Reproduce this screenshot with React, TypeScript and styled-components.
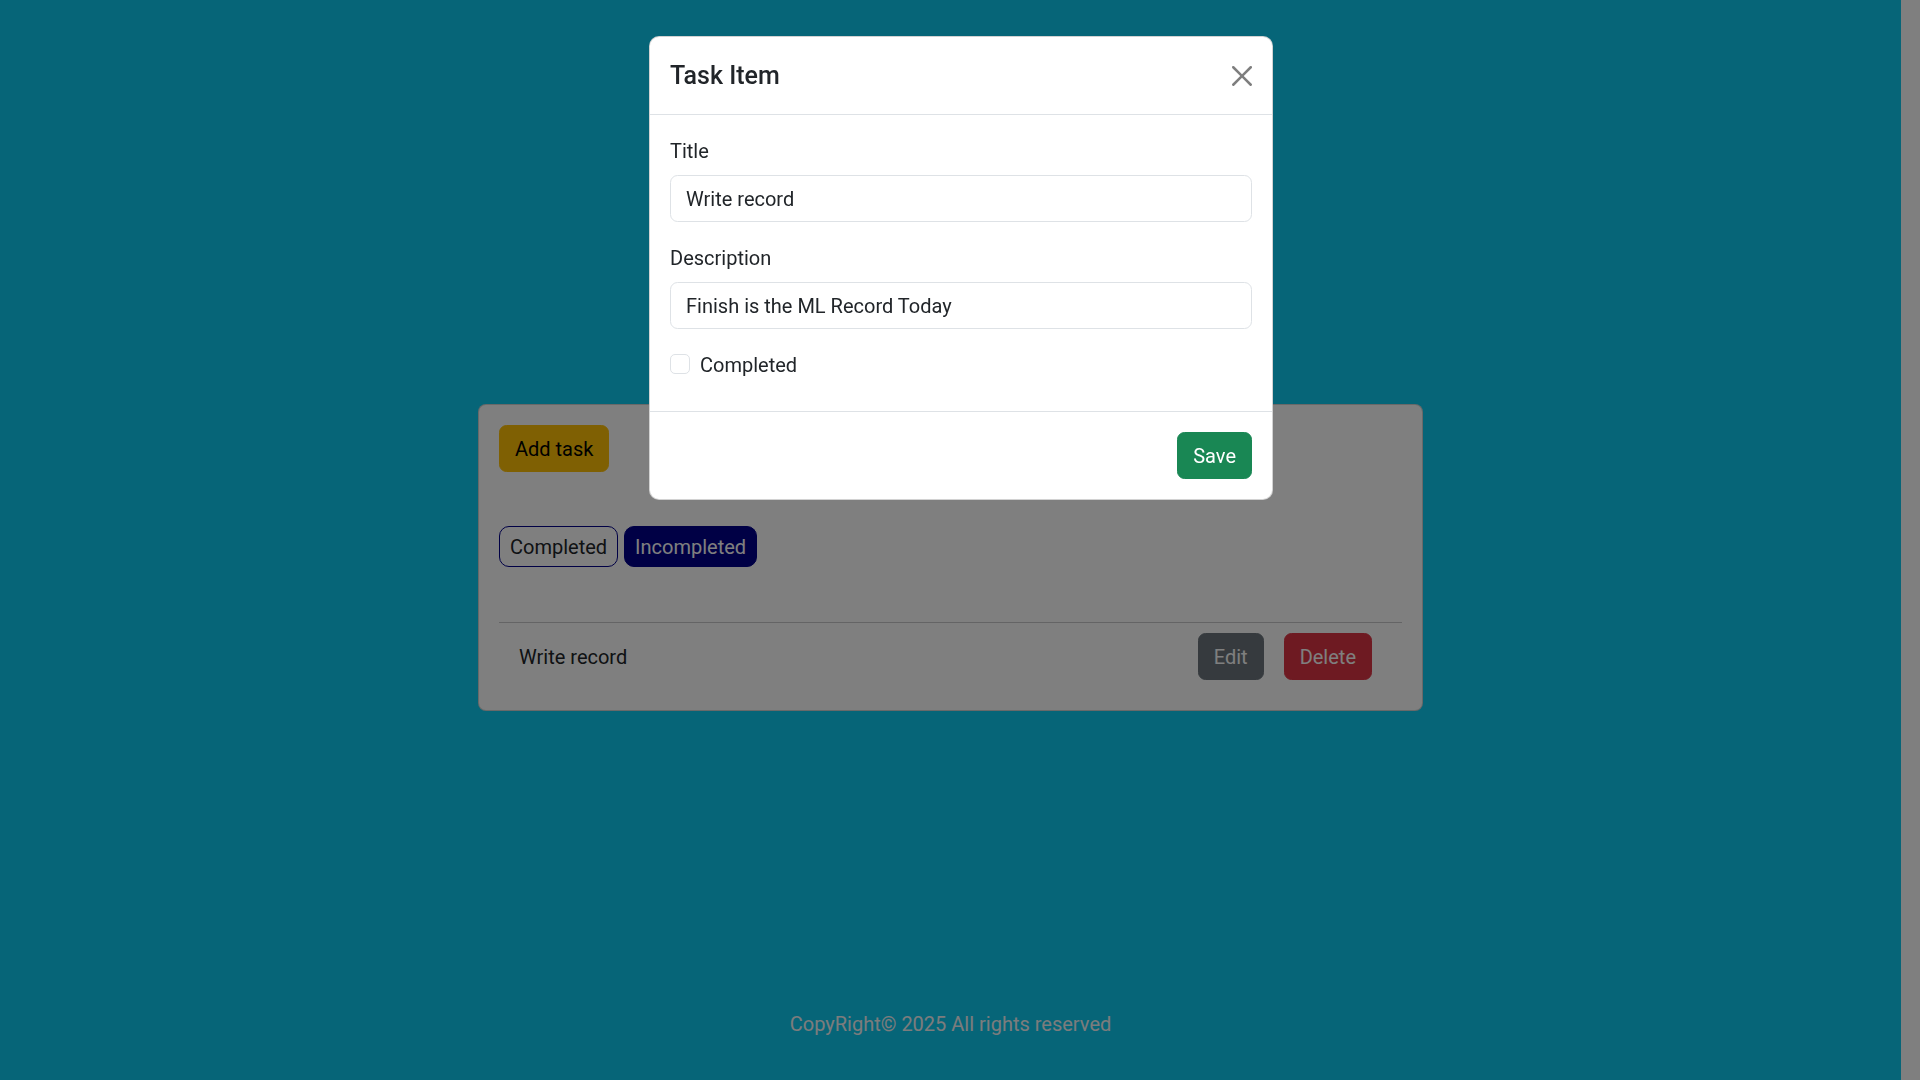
import React from "react";
import styled, { createGlobalStyle } from "styled-components";

const GlobalStyle = createGlobalStyle`
  html, body {
    margin: 0;
    padding: 0;
    background: #ffffff;
  }
  body {
    font-family: Roboto, "Liberation Sans", sans-serif;
    font-size: 20px;
    line-height: 1.5;
    color: #212529;
  }
  * { box-sizing: border-box; }
`;

const Page = styled.div`
  display: flex;
  height: 100vh;
  width: 100%;
  overflow: hidden;
`;

const Main = styled.main`
  flex: 1;
  background: #0dcaf0;
  display: flex;
  flex-direction: column;
  align-items: center;
  padding-top: 404px;
  padding-bottom: 41px;
`;

const ScrollGutter = styled.div`
  width: 19px;
  background: #ffffff;
`;

const Card = styled.section`
  width: 945px;
  background: #ffffff;
  border: 1px solid rgba(0, 0, 0, 0.175);
  border-radius: 8px;
  padding: 20px 20px 20px;
  display: flex;
  flex-direction: column;
`;

const Btn = styled.button<{ $variant: "warning" | "secondary" | "danger" | "success" }>`
  font-family: inherit;
  font-size: 20px;
  line-height: 30px;
  height: 47px;
  padding: 8px 15px 7px;
  border-radius: 7.5px;
  border: 1px solid transparent;
  cursor: pointer;
  ${({ $variant }) =>
    $variant === "warning"
      ? "background:#ffc107;border-color:#ffc107;color:#000;"
      : $variant === "secondary"
      ? "background:#6c757d;border-color:#6c757d;color:#fff;"
      : $variant === "danger"
      ? "background:#dc3545;border-color:#dc3545;color:#fff;"
      : "background:#198754;border-color:#198754;color:#fff;"}
`;

const TopRow = styled.div`
  display: flex;
`;

const FilterRow = styled.div`
  display: flex;
  gap: 6px;
  margin-top: 54px;
`;

const FilterBtn = styled.button<{ $active?: boolean }>`
  font-family: inherit;
  font-size: 20px;
  line-height: 30px;
  height: 41px;
  padding: 5px 10px 4px;
  border-radius: 10px;
  border: 1px solid #00008b;
  background: ${({ $active }) => ($active ? "#00008b" : "transparent")};
  color: ${({ $active }) => ($active ? "#ffffff" : "#212529")};
  cursor: pointer;
`;

const Divider = styled.hr`
  margin: 55px 0 0;
  border: 0;
  border-top: 1px solid #c8c9ca;
`;

const TaskRow = styled.div`
  display: flex;
  align-items: center;
  padding: 10px 30px 10px 20px;
  gap: 20px;
`;

const TaskTitle = styled.span`
  flex: 1;
  font-size: 20px;
  line-height: 30px;
  padding-top: 1px;
`;

const Footer = styled.footer`
  margin-top: auto;
  font-size: 20px;
  line-height: 30px;
  color: #f8f9fa;
`;

const Backdrop = styled.div`
  position: fixed;
  inset: 0;
  background: rgba(0, 0, 0, 0.5);
  display: flex;
  flex-direction: column;
  align-items: center;
  padding-top: 36px;
  padding-left: 2px;
`;

const Modal = styled.div`
  width: 624px;
  background: #ffffff;
  border: 1px solid rgba(0, 0, 0, 0.175);
  border-radius: 10px;
  display: flex;
  flex-direction: column;
`;

const ModalHeader = styled.div`
  display: flex;
  align-items: center;
  justify-content: space-between;
  padding: 20px;
  border-bottom: 1px solid #dee2e6;
`;

const ModalTitle = styled.h5`
  margin: 0;
  font-size: 25px;
  font-weight: 500;
  line-height: 37px;
  color: #212529;
`;

const CloseButton = styled.button`
  width: 20px;
  height: 20px;
  padding: 0;
  border: 0;
  background: transparent;
  display: flex;
  cursor: pointer;
  opacity: 0.5;
`;

const ModalBody = styled.div`
  padding: 20px;
  display: flex;
  flex-direction: column;
`;

const Field = styled.div`
  display: flex;
  flex-direction: column;
  margin-bottom: 20px;
`;

const Label = styled.label`
  font-size: 20px;
  line-height: 30px;
  padding-top: 1px;
  margin-bottom: 9px;
  color: #212529;
`;

const Input = styled.input`
  height: 47px;
  width: 100%;
  padding: 8px 15px 7px;
  font-family: inherit;
  font-size: 20px;
  line-height: 30px;
  color: #212529;
  border: 1px solid #dee2e6;
  border-radius: 7.5px;
  background: #fff;
  outline: none;
`;

const CheckRow = styled.div`
  display: flex;
  align-items: center;
  gap: 10px;
  height: 30px;
  margin-bottom: 12px;
`;

const CheckBox = styled.span`
  width: 20px;
  height: 20px;
  border: 1px solid #dee2e6;
  border-radius: 5px;
  background: #fff;
`;

const CheckLabel = styled.span`
  font-size: 20px;
  line-height: 30px;
  padding-top: 2px;
`;

const ModalFooter = styled.div`
  display: flex;
  justify-content: flex-end;
  padding: 20px;
  border-top: 1px solid #dee2e6;
`;

export default function App() {
  return (
    <>
      <GlobalStyle />
      <Page>
        <Main>
          <Card>
            <TopRow>
              <Btn $variant="warning">Add task</Btn>
            </TopRow>
            <FilterRow>
              <FilterBtn>Completed</FilterBtn>
              <FilterBtn $active>Incompleted</FilterBtn>
            </FilterRow>
            <Divider />
            <TaskRow>
              <TaskTitle>Write record</TaskTitle>
              <Btn $variant="secondary">Edit</Btn>
              <Btn $variant="danger">Delete</Btn>
            </TaskRow>
          </Card>
          <Footer>CopyRight© 2025 All rights reserved</Footer>
        </Main>
        <ScrollGutter />
      </Page>
      <Backdrop>
        <Modal>
          <ModalHeader>
            <ModalTitle>Task Item</ModalTitle>
            <CloseButton aria-label="Close">
              <svg width="20" height="20" viewBox="0 0 16 16" fill="#000">
                <path d="M.293.293a1 1 0 0 1 1.414 0L8 6.586 14.293.293a1 1 0 1 1 1.414 1.414L9.414 8l6.293 6.293a1 1 0 0 1-1.414 1.414L8 9.414l-6.293 6.293a1 1 0 0 1-1.414-1.414L6.586 8 .293 1.707a1 1 0 0 1 0-1.414z" />
              </svg>
            </CloseButton>
          </ModalHeader>
          <ModalBody>
            <Field>
              <Label>Title</Label>
              <Input defaultValue="Write record" />
            </Field>
            <Field>
              <Label>Description</Label>
              <Input defaultValue="Finish is the ML Record Today" />
            </Field>
            <CheckRow>
              <CheckBox />
              <CheckLabel>Completed</CheckLabel>
            </CheckRow>
          </ModalBody>
          <ModalFooter>
            <Btn $variant="success">Save</Btn>
          </ModalFooter>
        </Modal>
      </Backdrop>
    </>
  );
}
